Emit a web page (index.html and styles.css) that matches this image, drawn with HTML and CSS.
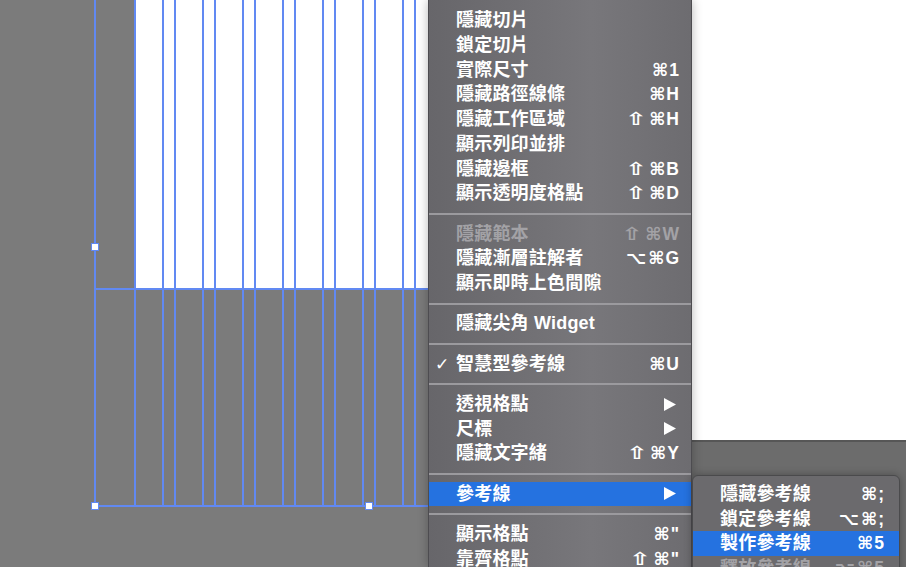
FILE: index.html
```html
<!DOCTYPE html>
<html>
<head>
<meta charset="utf-8">
<link rel="stylesheet" href="styles.css">
</head>
<body>
<div class="screen">
  <div class="canvas">
    <svg class="guides" width="428" height="567" viewBox="0 0 428 567">
      <rect x="135" y="0" width="293" height="289" fill="#ffffff"/>
      <g stroke="#6189f2" stroke-width="2" fill="none">
        <line x1="95" y1="0" x2="95" y2="506"/>
        <line x1="135" y1="0" x2="135" y2="506"/>
        <line x1="163" y1="0" x2="163" y2="506"/>
        <line x1="175" y1="0" x2="175" y2="506"/>
        <line x1="203" y1="0" x2="203" y2="506"/>
        <line x1="215" y1="0" x2="215" y2="506"/>
        <line x1="243" y1="0" x2="243" y2="506"/>
        <line x1="255" y1="0" x2="255" y2="506"/>
        <line x1="283" y1="0" x2="283" y2="506"/>
        <line x1="295" y1="0" x2="295" y2="506"/>
        <line x1="323" y1="0" x2="323" y2="506"/>
        <line x1="335" y1="0" x2="335" y2="506"/>
        <line x1="363" y1="0" x2="363" y2="506"/>
        <line x1="375" y1="0" x2="375" y2="506"/>
        <line x1="403" y1="0" x2="403" y2="506"/>
        <line x1="415" y1="0" x2="415" y2="506"/>
        <line x1="95" y1="289" x2="428" y2="289"/>
        <line x1="95" y1="506" x2="428" y2="506"/>
      </g>
      <g fill="#ffffff" stroke="#6189f2" stroke-width="1">
        <rect x="91.5" y="243.5" width="7" height="7"/>
        <rect x="91.5" y="502.5" width="7" height="7"/>
        <rect x="365.5" y="502.5" width="7" height="7"/>
      </g>
    </svg>
  </div>

  <div class="menu">
    <div class="item"><span class="check"></span><span class="label">隱藏切片</span><span class="key"></span></div>
    <div class="item"><span class="check"></span><span class="label">鎖定切片</span><span class="key"></span></div>
    <div class="item"><span class="check"></span><span class="label">實際尺寸</span><span class="key">⌘1</span></div>
    <div class="item"><span class="check"></span><span class="label">隱藏路徑線條</span><span class="key">⌘H</span></div>
    <div class="item"><span class="check"></span><span class="label">隱藏工作區域</span><span class="key"><span class="mod">⇧</span>⌘H</span></div>
    <div class="item"><span class="check"></span><span class="label">顯示列印並排</span><span class="key"></span></div>
    <div class="item"><span class="check"></span><span class="label">隱藏邊框</span><span class="key"><span class="mod">⇧</span>⌘B</span></div>
    <div class="item"><span class="check"></span><span class="label">顯示透明度格點</span><span class="key"><span class="mod">⇧</span>⌘D</span></div>
    <div class="sep"></div>
    <div class="item disabled"><span class="check"></span><span class="label">隱藏範本</span><span class="key"><span class="mod">⇧</span>⌘W</span></div>
    <div class="item"><span class="check"></span><span class="label">隱藏漸層註解者</span><span class="key"><span class="opt">⌥</span>⌘G</span></div>
    <div class="item"><span class="check"></span><span class="label">顯示即時上色間隙</span><span class="key"></span></div>
    <div class="sep"></div>
    <div class="item"><span class="check"></span><span class="label">隱藏尖角 Widget</span><span class="key"></span></div>
    <div class="sep"></div>
    <div class="item"><span class="check">✓</span><span class="label">智慧型參考線</span><span class="key">⌘U</span></div>
    <div class="sep"></div>
    <div class="item"><span class="check"></span><span class="label">透視格點</span><span class="key"><svg class="arrow" width="12" height="13" viewBox="0 0 12 13"><polygon points="0,0 12,6.5 0,13" fill="#ffffff"/></svg></span></div>
    <div class="item"><span class="check"></span><span class="label">尺標</span><span class="key"><svg class="arrow" width="12" height="13" viewBox="0 0 12 13"><polygon points="0,0 12,6.5 0,13" fill="#ffffff"/></svg></span></div>
    <div class="item"><span class="check"></span><span class="label">隱藏文字緒</span><span class="key"><span class="mod">⇧</span>⌘Y</span></div>
    <div class="sep"></div>
    <div class="item active"><span class="check"></span><span class="label">參考線</span><span class="key"><svg class="arrow" width="12" height="13" viewBox="0 0 12 13"><polygon points="0,0 12,6.5 0,13" fill="#ffffff"/></svg></span></div>
    <div class="sep"></div>
    <div class="item"><span class="check"></span><span class="label">顯示格點</span><span class="key">⌘"</span></div>
    <div class="item"><span class="check"></span><span class="label">靠齊格點</span><span class="key"><span class="mod">⇧</span>⌘"</span></div>
  </div>

  <div class="side">
    <div class="side-white"></div>
    <div class="side-gray"></div>
  </div>

  <div class="submenu">
    <div class="sitem"><span class="label">隱藏參考線</span><span class="key">⌘;</span></div>
    <div class="sitem"><span class="label">鎖定參考線</span><span class="key"><span class="opt">⌥</span>⌘;</span></div>
    <div class="sitem active"><span class="label">製作參考線</span><span class="key">⌘5</span></div>
    <div class="sitem disabled"><span class="label">釋放參考線</span><span class="key"><span class="opt">⌥</span>⌘5</span></div>
  </div>
</div>
</body>
</html>
```

FILE: styles.css
```css
html, body {
  margin: 0;
  padding: 0;
  width: 906px;
  height: 567px;
  overflow: hidden;
  background: #7b7b7b;
}

.screen {
  position: relative;
  display: flex;
  width: 906px;
  height: 567px;
  overflow: hidden;
  font-family: "Liberation Sans", "Noto Sans CJK TC", "DejaVu Sans", sans-serif;
  color: #ffffff;
}

.canvas {
  flex: 0 0 428px;
  height: 567px;
  background: #7b7b7b;
}

.guides {
  display: block;
}

.menu {
  position: relative;
  z-index: 2;
  flex: 0 0 264px;
  box-sizing: border-box;
  height: 567px;
  padding-top: 8px;
  border-left: 1px solid #4d4c50;
  border-right: 1px solid #4d4c50;
  background: linear-gradient(90deg, #67666a 0%, #6f6e72 30%, #78777b 62%, #6d6c70 100%);
  box-shadow: 0 0 10px rgba(0, 0, 0, 0.28);
}

.item {
  display: grid;
  grid-template-columns: 27px 1fr auto;
  align-items: center;
  height: 24.75px;
  padding-right: 11px;
  font-size: 18px;
  font-weight: 500;
  line-height: 24.75px;
  white-space: nowrap;
}

.check {
  padding-left: 6px;
  font-family: "DejaVu Sans", sans-serif;
  font-size: 17px;
  font-weight: 700;
}

.label {
  font-family: "Liberation Sans", "Noto Sans CJK TC", sans-serif;
  font-weight: 700;
  letter-spacing: 0.2px;
}

.key {
  display: flex;
  align-items: center;
  justify-content: flex-end;
  font-family: "Liberation Sans", "DejaVu Sans", sans-serif;
  font-size: 17.5px;
  font-weight: 700;
  letter-spacing: 1px;
}

.mod {
  display: inline-block;
  margin-right: 5px;
  font-family: "DejaVu Sans", sans-serif;
  font-size: 18px;
  font-weight: 700;
  letter-spacing: 0;
  transform: scaleX(1.45);
}

.opt {
  display: inline-block;
  margin-right: 2px;
  font-family: "DejaVu Sans", sans-serif;
  font-weight: 700;
  letter-spacing: 0;
}

.arrow {
  display: block;
  margin-right: 4px;
}

.item.disabled {
  color: #a3a2a6;
}

.item.active {
  background: #2572e0;
}

.sep {
  position: relative;
  height: 15.5px;
}

.sep::after {
  content: "";
  position: absolute;
  left: 0;
  right: 0;
  top: 7px;
  height: 2px;
  background: #9b9a9e;
}

.side {
  flex: 1 1 auto;
  display: flex;
  flex-direction: column;
  height: 567px;
}

.side-white {
  height: 440px;
  background: #ffffff;
}

.side-gray {
  flex: 1 1 auto;
  border-top: 2px solid #565656;
  background: #6c6c6c;
}

.submenu {
  position: absolute;
  z-index: 3;
  left: 692px;
  top: 475px;
  width: 208px;
  height: 110px;
  box-sizing: border-box;
  padding-top: 6px;
  border: 1px solid #4a4a4c;
  border-radius: 6px 6px 0 0;
  background: #6b6a6d;
  box-shadow: 0 0 8px rgba(0, 0, 0, 0.3);
}

.sitem {
  display: flex;
  align-items: center;
  justify-content: space-between;
  height: 24.5px;
  padding: 0 14px 0 27px;
  font-size: 18px;
  line-height: 24.5px;
  white-space: nowrap;
}

.sitem .label {
  font-weight: 700;
}

.sitem.active {
  background: #2572e0;
}

.sitem.disabled {
  color: #a3a2a6;
}
```
